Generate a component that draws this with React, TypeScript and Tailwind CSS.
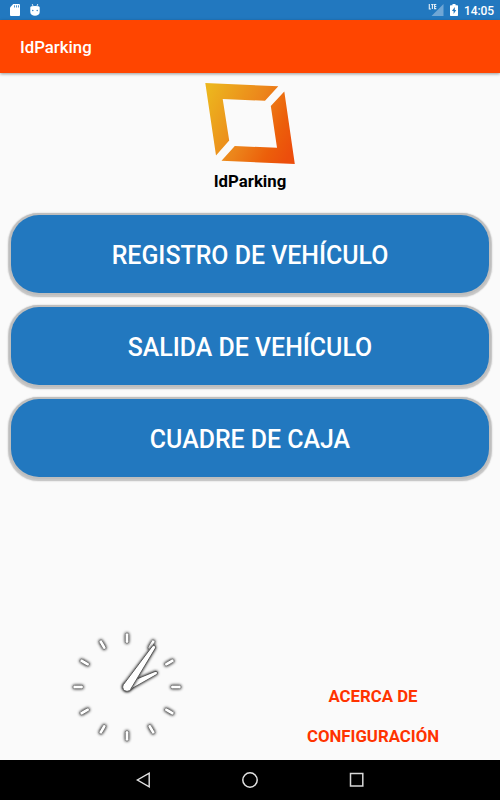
const MENU = ['REGISTRO DE VEHÍCULO', 'SALIDA DE VEHÍCULO', 'CUADRE DE CAJA'];

const LINKS = ['ACERCA DE', 'CONFIGURACIÓN'];

const HOURS = [0, 30, 60, 90, 120, 150, 180, 210, 240, 270, 300, 330];

const StatusBar = () => {
    return (
        <div className="h-5 bg-[#2278bf] flex items-center justify-between pl-2.5 pr-[6px] text-white">
            <div className="flex items-center gap-2.5">
                <svg width="10" height="12" viewBox="0 0 10 12">
                    <path d="M3.2 0H9a1 1 0 0 1 1 1v10a1 1 0 0 1-1 1H1a1 1 0 0 1-1-1V3.4z" fill="#fff"/>
                    <path d="M4.500 1.300v2.200M6.500 1.300v2.200M8.500 1.300v2.200" stroke="#2278bf" strokeWidth=".8"/>
                </svg>
                <svg width="10" height="12" viewBox="0 0 10 12">
                    <path d="M2.200 0l1 2.500M7.800 0l-1 2.500" stroke="#fff" strokeWidth=".8"/>
                    <path d="M.3 3.400Q.3 2.500 1.500 2.300Q5 1.600 8.500 2.300Q9.700 2.500 9.700 3.400V8C9.700 10.500 7.500 11.800 5 11.800S.3 10.500 .3 8z" fill="#fff"/>
                    <circle cx="2.800" cy="6.500" r=".7" fill="#2278bf"/>
                    <circle cx="7.200" cy="6.500" r=".7" fill="#2278bf"/>
                </svg>
            </div>
            <div className="flex items-center">
                <svg width="16" height="14" viewBox="0 0 16 14" className="mr-[6px]">
                    <path d="M15.500 1v12H3.500z" fill="#6fa6d5"/>
                    <path d="M1.300 1v5h1.700M3.200 1.500h2.400M4.400 1.500V6M8.300 1.500H6.600V5.600H8.300M6.600 3.500H8.300" fill="none" stroke="#e6f0f8" strokeWidth="1.100"/>
                </svg>
                <svg width="8" height="12" viewBox="0 0 8 12" className="mr-[6px]">
                    <path d="M2.500 0h3v1.200H7.300a.7.7 0 0 1 .7.7v9.400a.7.7 0 0 1-.7.700H.7a.7.7 0 0 1-.7-.7V1.900a.7.7 0 0 1 .7-.7h1.800z" fill="#fff"/>
                    <path d="M4.800 3L1.900 7h1.700v3L6.300 5.900H4.800z" fill="#2278bf"/>
                </svg>
                <span className="text-[12px] font-medium leading-5 tracking-[-0.1px] relative top-px">14:05</span>
            </div>
        </div>
    )
}

const Logo = () => {
    return (
        <svg width="90" height="82" viewBox="0 0 90 82" className="block">
            <defs>
                <linearGradient id="logo" x1="0" y1="15" x2="90" y2="60" gradientUnits="userSpaceOnUse">
                    <stop offset="0" stopColor="#ecb51e"/>
                    <stop offset=".5" stopColor="#ec851b"/>
                    <stop offset=".8" stopColor="#ec5f0a"/>
                    <stop offset="1" stopColor="#ec4e0c"/>
                </linearGradient>
            </defs>
            <path d="M.3 0L73.300 3.200L60 17.800L17.700 16L24.200 57.500L11 72.500Z" fill="url(#logo)"/>
            <path d="M79.300 8.500L89.800 81L16.500 77.800L29.800 63L72 64.800L65.800 23Z" fill="url(#logo)"/>
        </svg>
    )
}

const Clock = () => {
    return (
        <svg width="130" height="130" viewBox="-65 -65 130 130" className="block">
            <defs>
                <filter id="glow" x="-65" y="-65" width="130" height="130" filterUnits="userSpaceOnUse">
                    <feDropShadow dx="0" dy="0" stdDeviation="1.500" floodColor="#000" floodOpacity="1"/>
                </filter>
            </defs>
            <g filter="url(#glow)">
                {HOURS.map((angle) => (
                    <rect key={angle} x="-1.700" y="-54" width="3.400" height="10.300" rx="1.500" transform={`rotate(${angle})`} fill="#fff" stroke="#707070" strokeWidth=".8"/>
                ))}
            </g>
            <g fill="#fff" stroke="#585858" strokeWidth=".9">
                <g filter="url(#glow)">
                    <path d="M-3.800 0L-1.700 -32.500Q0 -35 1.700 -32.500L3.800 0A3.800 3.800 0 0 1 -3.800 0Z" transform="rotate(64)"/>
                </g>
                <g filter="url(#glow)">
                    <path d="M-4.300 0L-1.800 -48.500Q0 -51 1.800 -48.500L4.300 0A4.300 4.300 0 0 1 -4.300 0Z" transform="rotate(34)"/>
                </g>
            </g>
        </svg>
    )
}

const NavigationBar = () => {
    return (
        <div className="h-10 bg-black flex items-center justify-center gap-[91px]">
            <svg width="16" height="16" viewBox="0 0 16 16" fill="none" stroke="#e2e2e2" strokeWidth="1.400">
                <path d="M14.200 1.200v13.600L2.400 8z"/>
            </svg>
            <svg width="16" height="16" viewBox="0 0 16 16" fill="none" stroke="#e2e2e2" strokeWidth="1.500">
                <circle cx="8" cy="8" r="7.200"/>
            </svg>
            <svg width="16" height="16" viewBox="0 0 16 16" fill="none" stroke="#d8d8d8" strokeWidth="1.500">
                <path d="M1.500 1.600h12.300v12.500H1.500z"/>
            </svg>
        </div>
    )
}

const App = () => {
    return (
        <div className="w-[500px] h-[800px] bg-[#fafafa] flex flex-col overflow-hidden font-[Roboto,sans-serif]">
            <StatusBar/>
            <header className="h-[53px] shrink-0 bg-[#ff4500] flex items-center px-5 pt-[3px] shadow-[0_1px_3px_rgba(0,0,0,0.4)]">
                <h1 className="text-[16.800px] font-medium text-white">IdParking</h1>
            </header>
            <main className="flex-1 flex flex-col">
                <div className="flex flex-col items-center pt-[10px]">
                    <Logo/>
                    <p className="mt-1 text-[16.800px] leading-6 font-bold text-black">IdParking</p>
                </div>
                <div className="mt-[22px] px-[11px] flex flex-col gap-[14px]">
                    {MENU.map((label) => (
                        <button key={label} className="h-[78px] rounded-[28px] bg-[#2278bf] pt-[3px] text-[24.900px] font-medium text-white shadow-[0_0_0_2px_#bebebe,0_1px_1px_2.5px_#c6c6c6,0_1px_2px_3px_#dadada]">
                            {label}
                        </button>
                    ))}
                </div>
                <div className="mt-auto pb-2 pl-[62px] pr-[41px] flex items-end justify-between">
                    <Clock/>
                    <div className="w-[172px] -mb-[5px] flex flex-col items-center">
                        {LINKS.map((label) => (
                            <a key={label} href="#" className="h-10 flex items-center text-[16.800px] font-bold text-[#ff3300]">{label}</a>
                        ))}
                    </div>
                </div>
            </main>
            <NavigationBar/>
        </div>
    )
}

export default App;
